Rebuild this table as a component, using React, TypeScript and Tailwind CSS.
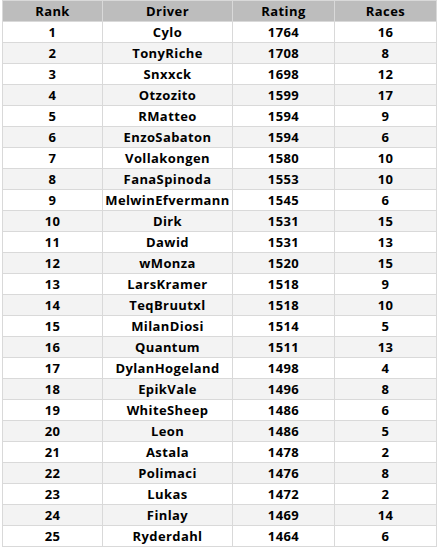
const rows: [number, string, number, number][] = [
  [1, "Cylo", 1764, 16],
  [2, "TonyRiche", 1708, 8],
  [3, "Snxxck", 1698, 12],
  [4, "Otzozito", 1599, 17],
  [5, "RMatteo", 1594, 9],
  [6, "EnzoSabaton", 1594, 6],
  [7, "Vollakongen", 1580, 10],
  [8, "FanaSpinoda", 1553, 10],
  [9, "MelwinEfvermann", 1545, 6],
  [10, "Dirk", 1531, 15],
  [11, "Dawid", 1531, 13],
  [12, "wMonza", 1520, 15],
  [13, "LarsKramer", 1518, 9],
  [14, "TeqBruutxl", 1518, 10],
  [15, "MilanDiosi", 1514, 5],
  [16, "Quantum", 1511, 13],
  [17, "DylanHogeland", 1498, 4],
  [18, "EpikVale", 1496, 8],
  [19, "WhiteSheep", 1486, 6],
  [20, "Leon", 1486, 5],
  [21, "Astala", 1478, 2],
  [22, "Polimaci", 1476, 8],
  [23, "Lukas", 1472, 2],
  [24, "Finlay", 1469, 14],
  [25, "Ryderdahl", 1464, 6],
];

const cell = "border border-[#d9d9d9] h-[21px] p-0 text-center align-middle leading-none";

export default function App() {
  return (
    <div className="w-[438px] h-[548px] bg-white pl-[2px] font-['Open_Sans',sans-serif] text-[13px] font-bold tracking-[0.4px] text-black">
      <table className="border-collapse table-fixed w-[434px]">
        <colgroup>
          <col className="w-[100px]" />
          <col className="w-[130px]" />
          <col className="w-[102px]" />
          <col className="w-[102px]" />
        </colgroup>
        <thead>
          <tr className="bg-[#bdbdbd]">
            <th className={cell + " border-[#c8c8c8]"}>Rank</th>
            <th className={cell + " border-[#c8c8c8]"}>Driver</th>
            <th className={cell + " border-[#c8c8c8]"}>Rating</th>
            <th className={cell + " border-[#c8c8c8]"}>Races</th>
          </tr>
        </thead>
        <tbody>
          {rows.map(([rank, name, rating, races]) => (
            <tr key={rank} className={rank % 2 === 0 ? "bg-[#f3f3f3]" : "bg-white"}>
              <td className={cell}>{rank}</td>
              <td className={cell}>{name}</td>
              <td className={cell}>{rating}</td>
              <td className={cell}>{races}</td>
            </tr>
          ))}
        </tbody>
      </table>
    </div>
  );
}
